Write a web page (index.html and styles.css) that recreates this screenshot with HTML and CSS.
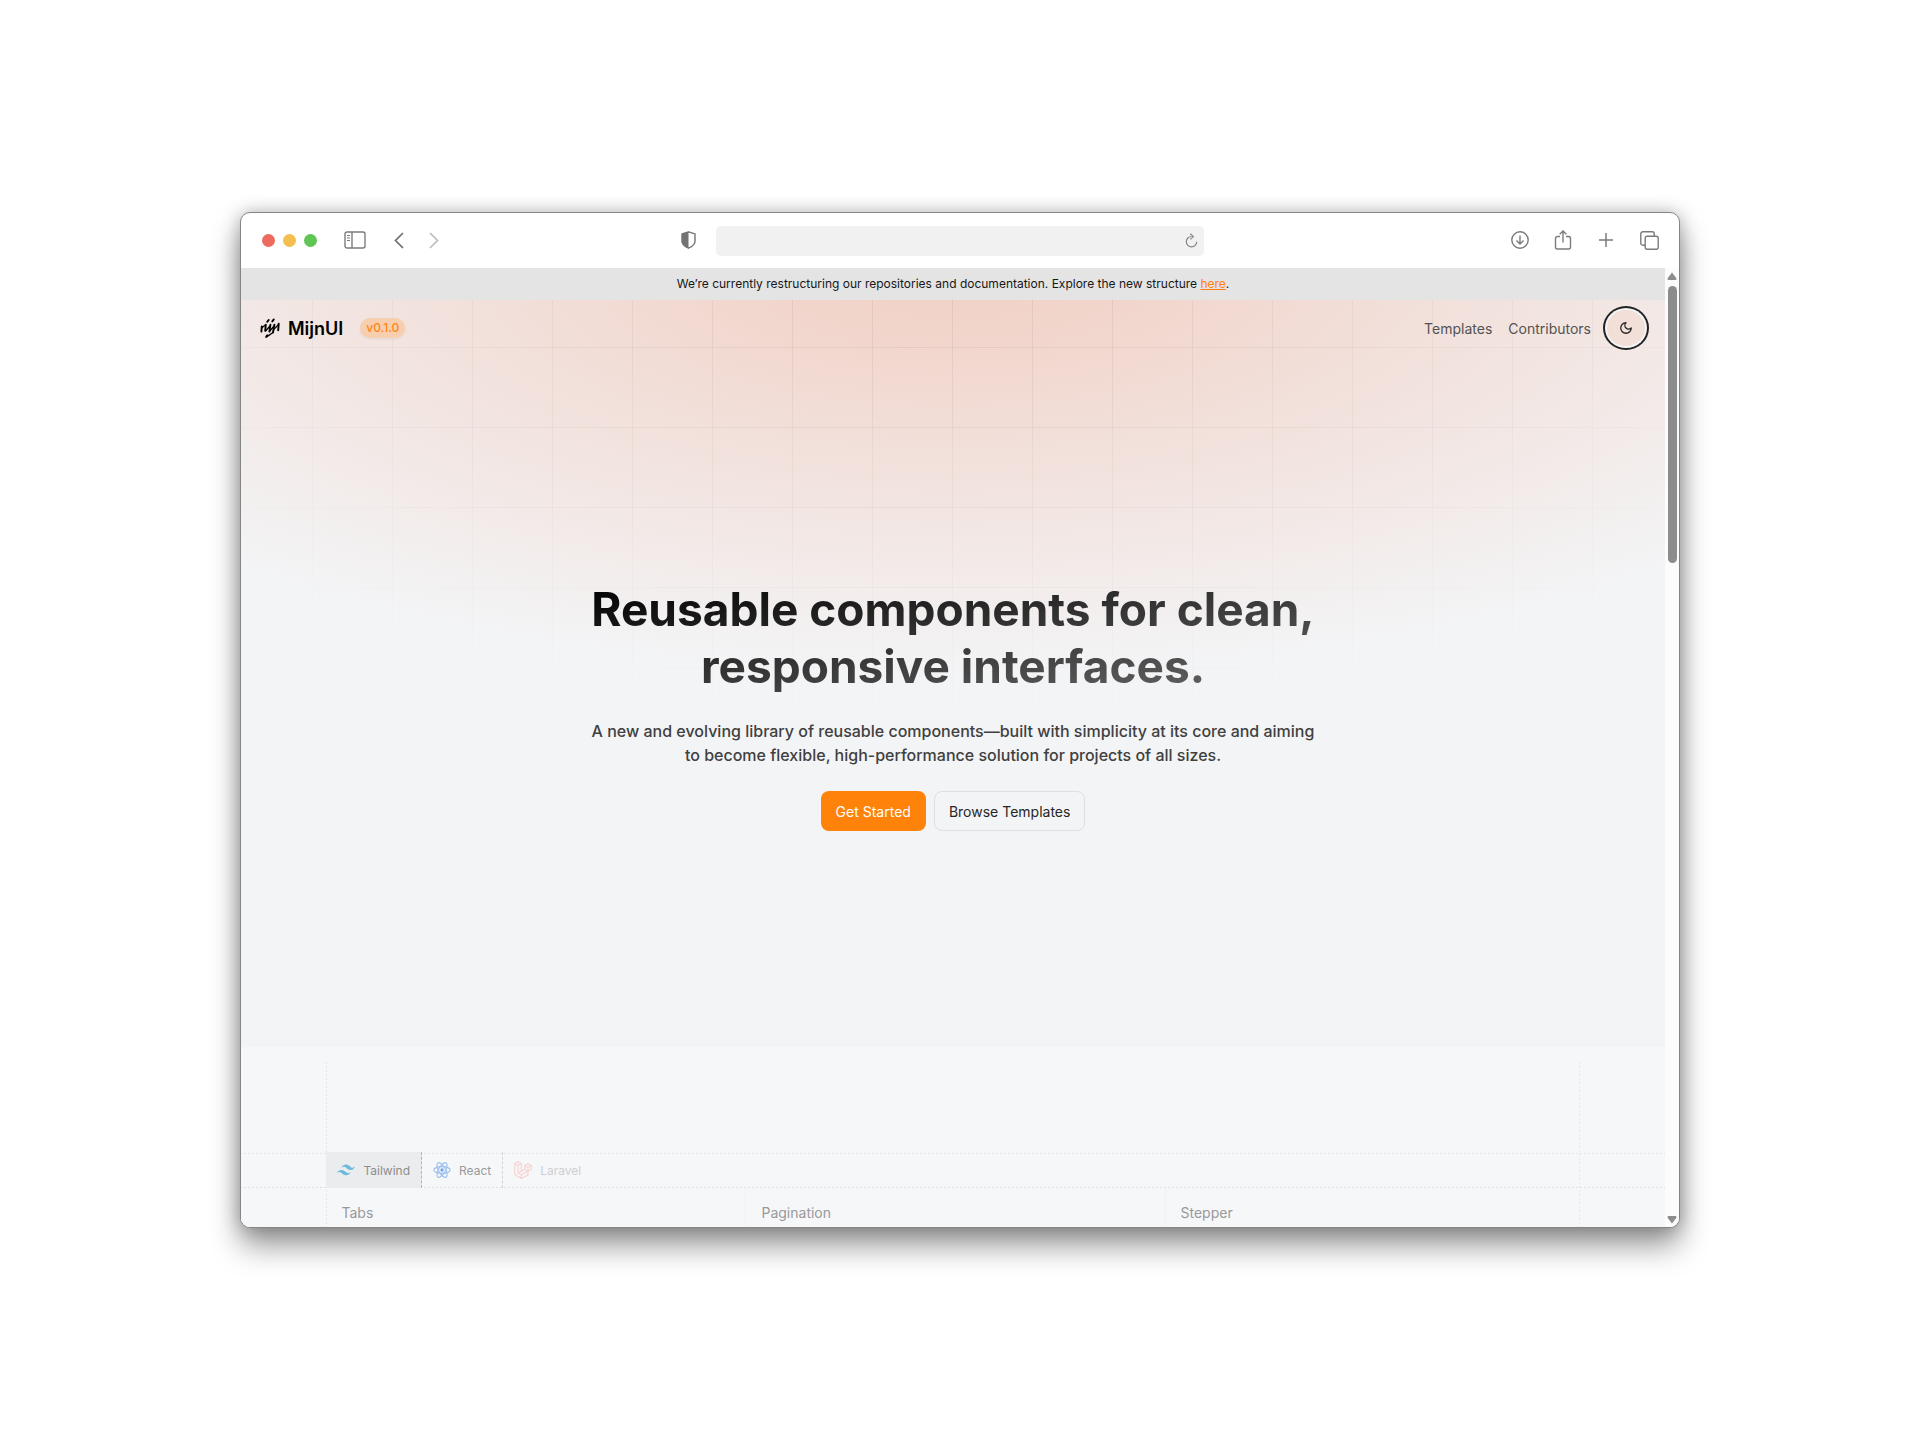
FILE: index.html
```html
<!DOCTYPE html>
<html lang="en">
<head>
  <meta charset="UTF-8">
  <meta name="viewport" content="width=device-width, initial-scale=1.0">
  <title>MijnUI</title>
  <link rel="stylesheet" href="styles.css">
</head>
<body>
  <div class="window">
    <div class="toolbar">
      <div class="toolbar-left">
        <div class="lights">
          <span class="light red"></span>
          <span class="light yellow"></span>
          <span class="light green"></span>
        </div>
        <button class="tool sidebar" aria-label="Sidebar">
          <svg width="22" height="18" viewBox="0 0 22 18" fill="none" stroke="#7b7b7b" stroke-width="1.4"><rect x="1" y="1" width="20" height="16" rx="2"/><path d="M8 1v16"/><path d="M3 4.500h3M3 7h3M3 9.500h3" stroke-width="1"/></svg>
        </button>
        <button class="tool" aria-label="Back">
          <svg width="10" height="17" viewBox="0 0 10 17" fill="none" stroke="#6f6f6f" stroke-width="1.700"><path d="M9 1 1.500 8.500 9 16"/></svg>
        </button>
        <button class="tool forward" aria-label="Forward">
          <svg width="10" height="17" viewBox="0 0 10 17" fill="none" stroke="#bdbdbd" stroke-width="1.700"><path d="M1 1 8.500 8.500 1 16"/></svg>
        </button>
        <button class="tool shield" aria-label="Privacy report">
          <svg width="15" height="18" viewBox="0 0 15 18"><path d="M7.500.8 14 2.800v7.400c0 3-2.600 5.300-6.500 7C3.600 15.500 1 13.200 1 10.200V2.800z" fill="none" stroke="#737373" stroke-width="1.400" stroke-linejoin="round"/><path d="M7.500.8v16.400C3.600 15.500 1 13.200 1 10.200V2.800z" fill="#737373"/></svg>
        </button>
      </div>
      <div class="address">
        <input type="text" aria-label="Address">
        <button class="tool" aria-label="Reload">
          <svg width="13" height="15" viewBox="0 0 13 15" fill="none" stroke="#858585" stroke-width="1.200"><path d="M6.500 3.500A5.200 5.200 0 1 0 11.700 8.700"/><path d="M5.200.7 8.400 3.600 5.400 6.400"/></svg>
        </button>
      </div>
      <div class="toolbar-right">
        <button class="tool" aria-label="Downloads">
          <svg width="18" height="18" viewBox="0 0 18 18" fill="none" stroke="#7b7b7b" stroke-width="1.400"><circle cx="9" cy="9" r="8.200"/><path d="M9 4.500v8.500M5.500 9.600 9 13l3.500-3.400"/></svg>
        </button>
        <button class="tool" aria-label="Share">
          <svg width="18" height="20" viewBox="0 0 18 20" fill="none" stroke="#7b7b7b" stroke-width="1.400"><path d="M6 6.500H3.500a2 2 0 0 0-2 2V17a2 2 0 0 0 2 2h11a2 2 0 0 0 2-2V8.500a2 2 0 0 0-2-2H12"/><path d="M9 12.500V1.200M5.700 4.300 9 1l3.300 3.300"/></svg>
        </button>
        <button class="tool" aria-label="New tab">
          <svg width="18" height="18" viewBox="0 0 18 18" fill="none" stroke="#7b7b7b" stroke-width="1.500"><path d="M9 2v14M2 9h14"/></svg>
        </button>
        <button class="tool" aria-label="Show tabs">
          <svg width="19" height="19" viewBox="0 0 19 19" fill="none" stroke="#7b7b7b" stroke-width="1.400"><rect x="5.200" y="5.200" width="13" height="13" rx="2"/><path d="M5 14.200H2.800a2 2 0 0 1-2-2V2.800a2 2 0 0 1 2-2h9.400a2 2 0 0 1 2 2V5"/></svg>
        </button>
      </div>
    </div>

    <div class="viewport">
      <div class="page">
        <p class="banner">We’re currently restructuring our repositories and documentation. Explore the new structure <a href="#">here</a>.</p>

        <header class="header">
          <a class="brand" href="#">
            <svg width="20" height="20" viewBox="0 0 20 20" fill="none" stroke="#000" stroke-linecap="round"><path d="M1.800 8.400 1.400 13.600M5.800 6.600 5.200 12.800M10.400 6.800 9.400 13.600M14.400 6.600 13 14.500M18.700 5.600 18.200 12.200" stroke-width="1.900"/><path d="M1.800 9.800 5.400 7M6 12.500 10 8M9.800 13 14 8M14.200 11 18.400 6.600M13 14.500 7 18.600" stroke-width="1.300"/><path d="M7.200 3.800 8.700 2M12.300 3.400 13.800 1.400M6.200 18.900 7.300 17.300" stroke-width="1.900"/></svg>
            <span>MijnUI</span>
          </a>
          <span class="badge">v0.1.0</span>
          <nav class="nav">
            <a href="#">Templates</a>
            <a href="#">Contributors</a>
          </nav>
          <button class="theme" aria-label="Toggle theme">
            <svg width="14" height="14" viewBox="0 0 24 24" fill="none" stroke="#222" stroke-width="2.200" stroke-linecap="round" stroke-linejoin="round"><path d="M12 3a6 6 0 0 0 9 9 9 9 0 1 1-9-9Z"/></svg>
          </button>
        </header>

        <main class="hero">
          <h1>Reusable components for clean,<br>responsive interfaces.</h1>
          <p>A new and evolving library of reusable components—built with simplicity at its core and aiming<br>to become flexible, high-performance solution for projects of all sizes.</p>
          <div class="actions">
            <button class="btn primary">Get Started</button>
            <button class="btn outline">Browse Templates</button>
          </div>
        </main>

        <section class="showcase">
          <div class="frame">
            <div class="tabs">
              <button class="tab active">
                <svg width="18" height="12" viewBox="0 0 54 33" fill="#6cbadd"><path d="M27 0c-7.200 0-11.700 3.600-13.500 10.800 2.700-3.600 5.850-4.950 9.450-4.050 2.054.513 3.522 2.004 5.147 3.653C30.744 13.090 33.808 16.200 40.500 16.200c7.200 0 11.700-3.600 13.500-10.800-2.700 3.600-5.850 4.950-9.450 4.050-2.054-.513-3.522-2.004-5.147-3.653C36.756 3.110 33.692 0 27 0zM13.500 16.200C6.300 16.200 1.800 19.800 0 27c2.700-3.600 5.850-4.950 9.450-4.050 2.054.514 3.522 2.004 5.147 3.653C17.244 29.290 20.308 32.400 27 32.400c7.200 0 11.700-3.600 13.500-10.800-2.700 3.600-5.850 4.950-9.450 4.050-2.054-.513-3.522-2.004-5.147-3.653C23.256 19.310 20.192 16.200 13.500 16.200z"/></svg>
                Tailwind
              </button>
              <button class="tab">
                <svg width="18" height="18" viewBox="-12 -12 24 24" fill="none" stroke="#9cc0f0" stroke-width="1.500"><circle r="2.200" fill="#6ea2ec" stroke="none"/><ellipse rx="11" ry="4.500"/><ellipse rx="11" ry="4.500" transform="rotate(60)"/><ellipse rx="11" ry="4.500" transform="rotate(120)"/></svg>
                React
              </button>
              <button class="tab" disabled>
                <svg width="18" height="18" viewBox="0 0 18 18" fill="none" stroke="#f8d3d0" stroke-width="1.100" stroke-linejoin="round"><path d="M.7 2.600 4 .7l3.300 1.900v7.600l3.400-2V4.600L14 2.700l3.300 1.900v3.700L14 10.200v3.700l-6.700 3.500-6.600-3.800zM.7 2.600 4 4.500l3.300-1.900M4 4.500v7.500l3.300-1.800M4 12l3.300 1.800 6.700-3.600M7.300 13.800v3.600M10.700 4.600 14 6.500l3.300-1.900M14 6.500v3.700l-3.300-2"/></svg>
                Laravel
              </button>
            </div>
            <div class="columns">
              <div class="column"><h2>Tabs</h2></div>
              <div class="column"><h2>Pagination</h2></div>
              <div class="column"><h2>Stepper</h2></div>
            </div>
          </div>
        </section>
      </div>

      <div class="scrollbar">
        <svg width="10" height="8" viewBox="0 0 10 8" fill="#8c8c8c"><path d="M5 .5 9.600 6.500 9 8H1L.4 6.500z"/></svg>
        <div class="track"><div class="thumb"></div></div>
        <svg width="10" height="8" viewBox="0 0 10 8" fill="#8c8c8c"><path d="M5 7.500 9.600 1.500 9 0H1L.4 1.500z"/></svg>
      </div>
    </div>
  </div>
</body>
</html>
```

FILE: styles.css
```css
* {
  box-sizing: border-box;
}
body {
  margin: 0;
  min-height: 100vh;
  display: flex;
  justify-content: center;
  align-items: center;
  background: #fff;
  font-family: Inter, "Liberation Sans", sans-serif;
  color: #111;
}
h1, h2, p {
  margin: 0;
}
button {
  font-family: inherit;
  cursor: pointer;
}
a {
  color: inherit;
  text-decoration: none;
}

/* browser window */
.window {
  width: 75%;
  border: 1px solid #858585;
  border-radius: 10px;
  overflow: hidden;
  background: #fff;
  box-shadow: 0 0 18px rgba(0, 0, 0, 0.25), 0 18px 30px rgba(0, 0, 0, 0.4);
}
.toolbar {
  display: grid;
  grid-template-columns: 1fr 34% 1fr;
  align-items: center;
  height: 55px;
}
.toolbar-left {
  display: flex;
  align-items: center;
  padding: 0 20px 1px 21px;
}
.lights {
  display: flex;
  gap: 8px;
}
.light {
  width: 13px;
  height: 13px;
  border-radius: 50%;
}
.red {
  background: #ec6a5e;
}
.yellow {
  background: #f4bf4f;
}
.green {
  background: #61c554;
}
.tool {
  display: flex;
  padding: 0;
  border: none;
  background: none;
}
.sidebar {
  margin: 0 28px 0 27px;
}
.forward {
  margin-left: 25px;
}
.shield {
  margin-left: auto;
}
.address {
  display: flex;
  align-items: center;
  height: 30px;
  padding-right: 6px;
  border-radius: 5px;
  background: #f1f1f1;
}
.address input {
  flex: 1;
  min-width: 0;
  border: none;
  outline: none;
  background: none;
}
.toolbar-right {
  display: flex;
  justify-content: flex-end;
  align-items: center;
  gap: 25px;
  padding: 0 20px 1px 0;
}
.viewport {
  display: flex;
}

/* page */
.page {
  flex: 1;
  min-width: 0;
  position: relative;
  z-index: 0;
  background: radial-gradient(1060px 405px at 50% 0, #f1cfc3, #f3f4f6);
}
.page::before {
  content: "";
  position: absolute;
  z-index: -1;
  inset: 0;
  background-image:
    linear-gradient(to right, rgba(60, 40, 30, 0.08) 1px, transparent 1px),
    linear-gradient(to top, rgba(60, 40, 30, 0.08) 1px, transparent 1px);
  background-size: 80px 80px;
  background-position: calc(50% + 39px) 0;
  mask-image: radial-gradient(1060px 480px at 50% 0, #000, transparent);
}
.banner {
  padding: 6px 0;
  background: #e4e4e4;
  color: #171717;
  font-size: 12px;
  line-height: 20px;
  text-align: center;
}
.banner a {
  color: #ff8010;
  text-decoration: underline;
}
.header {
  display: flex;
  align-items: center;
  height: 56px;
  padding: 0 20px 0 19px;
}
.brand {
  display: flex;
  align-items: center;
  gap: 8px;
  color: #000;
  font-size: 18px;
  font-weight: 600;
}
.badge {
  margin-left: 17px;
  padding: 0 6px;
  border-radius: 10px;
  background: #f7cfae;
  box-shadow: 0 1px 3px rgba(0, 0, 0, 0.06);
  color: #ff8614;
  font-size: 12px;
  font-weight: 500;
  line-height: 20px;
}
.nav {
  display: flex;
  gap: 16px;
  margin: 0 16px 0 auto;
  color: #525252;
  font-size: 14px;
}
.theme {
  display: flex;
  align-items: center;
  justify-content: center;
  width: 38px;
  height: 36px;
  padding: 0;
  border: none;
  border-radius: 50%;
  background: #f2dfd7;
  box-shadow: 0 0 0 2px #f3f4f6, 0 0 0 4px #222;
}
.hero {
  display: flex;
  flex-direction: column;
  align-items: center;
  padding: 225px 16px 216px;
  text-align: center;
}
.hero h1 {
  background: linear-gradient(to bottom right, #000, #6a6a6a);
  background-clip: text;
  color: transparent;
  font-size: 46px;
  font-weight: 700;
  line-height: 57px;
}
.hero p {
  margin-top: 24px;
  color: #404040;
  font-size: 16px;
  font-weight: 500;
  line-height: 24px;
}
.actions {
  display: flex;
  gap: 8px;
  margin-top: 24px;
}
.btn {
  height: 40px;
  padding: 0 14px;
  border: 1px solid transparent;
  border-radius: 8px;
  font-size: 14px;
}
.primary {
  background: #ff820a;
  color: #fff;
}
.outline {
  border-color: #dedfe2;
  background: none;
  color: #262626;
}

/* component showcase */
.showcase {
  height: 180px;
  padding-top: 15px;
  overflow: hidden;
  background: #f6f7f9;
}
.frame {
  width: 88%;
  height: 100%;
  margin: 0 auto;
  padding-top: 90px;
  background:
    repeating-linear-gradient(#e4e5e7 0 2px, transparent 2px 4px) left / 1px 100% no-repeat,
    repeating-linear-gradient(#e8e9eb 0 2px, transparent 2px 4px) right / 1px 100% no-repeat;
}
.tabs {
  display: flex;
  height: 36px;
  margin: 0 -86px;
  padding: 0 86px;
  background:
    repeating-linear-gradient(to right, #e4e5e7 0 2px, transparent 2px 4px) 0 1px / 100% 1px no-repeat,
    repeating-linear-gradient(to right, #dddee0 0 2px, transparent 2px 4px) bottom / 100% 1px no-repeat;
}
.tab {
  display: flex;
  align-items: center;
  gap: 8px;
  padding: 0 11px;
  border: none;
  border-right: 1px dashed #d4d5d7;
  background: none;
  color: #9a9a9a;
  font-size: 12px;
}
.tab.active {
  border-right-color: #b4b4b4;
  background: #ebecee;
  color: #8c8c8c;
}
.tab:disabled {
  border-right: none;
  color: #cfcfd1;
}
.columns {
  display: grid;
  grid-template-columns: repeat(3, 1fr);
  gap: 4px;
}
.column {
  padding: 15px;
}
.column + .column {
  border-left: 1px solid #f1f2f4;
}
.column h2 {
  color: #99999b;
  font-size: 14px;
  font-weight: 400;
  line-height: 20px;
}

/* page scrollbar */
.scrollbar {
  display: flex;
  flex-direction: column;
  align-items: center;
  width: 14px;
  padding: 4px 0 3px;
  background: #fcfcfc;
}
.track {
  flex: 1;
  padding: 6px 0;
}
.thumb {
  width: 9px;
  height: 30%;
  border-radius: 5px;
  background: #8c8c8c;
}
```
